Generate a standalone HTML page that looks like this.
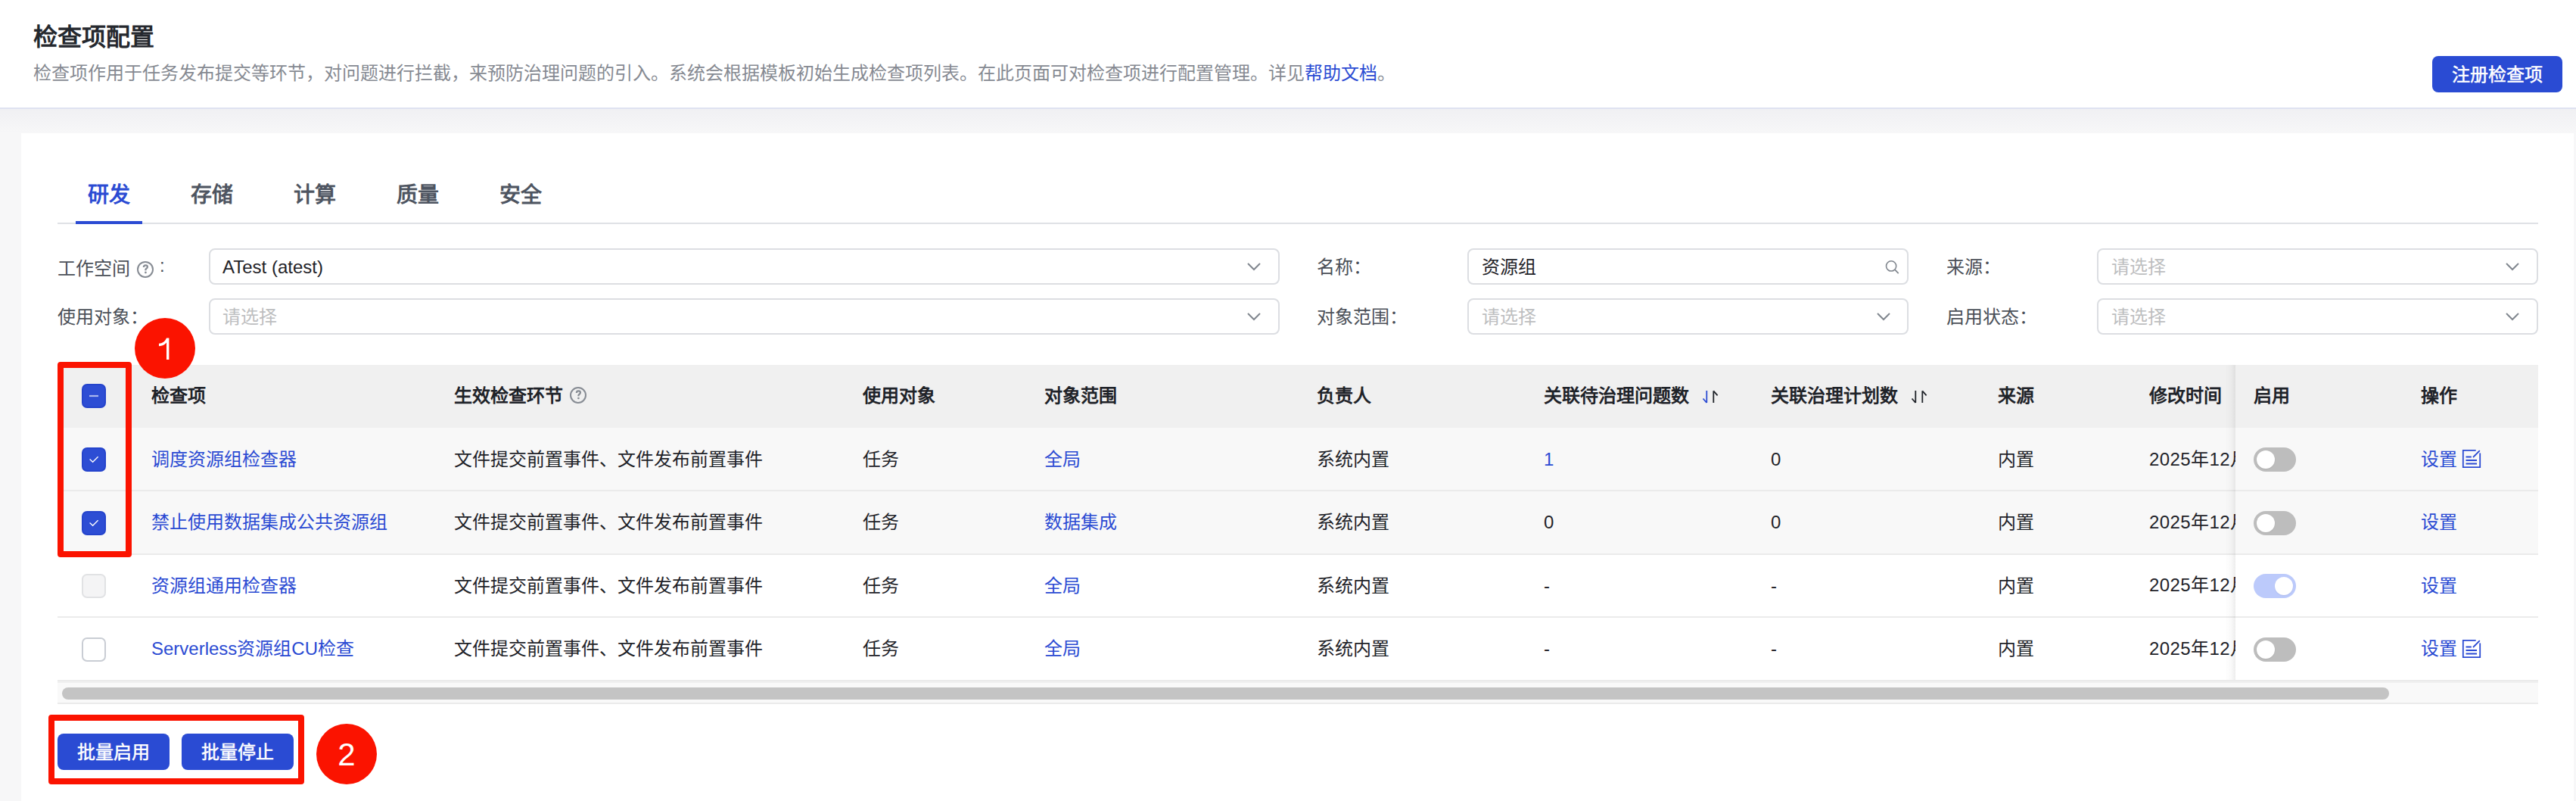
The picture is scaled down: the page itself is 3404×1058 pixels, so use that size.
<!DOCTYPE html>
<html lang="zh-CN"><head><meta charset="utf-8">
<style>
*{margin:0;padding:0;box-sizing:border-box}
html,body{width:3404px;height:1058px;overflow:hidden;background:linear-gradient(#f0f0f3 144px,#f7f7f8 176px,#f7f7f8);font-family:"Liberation Sans",sans-serif;color:#1f2329}
.a{position:absolute;white-space:nowrap}
#hdr{left:0;top:0;width:3404px;height:144px;background:#fff;border-bottom:2px solid #dfe2f1}
#title{left:44px;top:29px;font-size:32px;line-height:40px;font-weight:bold;color:#25282e}
#desc{left:44px;top:81px;font-size:24px;line-height:32px;color:#868a92}
#desc b{font-weight:normal;color:#2b4bd3}
.btn{background:#2a4bd3;color:#fff;border-radius:8px;font-size:24px;text-align:center;line-height:48px;height:48px;padding-top:1px;-webkit-text-stroke:0.5px #fff}
#card{left:28px;top:176px;width:3373px;height:900px;background:#fff}
.tab{top:240px;font-size:28px;line-height:36px;font-weight:bold;color:#4e5561}
.lbl{font-size:24px;line-height:32px;color:#4b5058}
.inp{height:48px;border:2px solid #dcdee2;border-radius:8px;background:#fff}
.ph{font-size:24px;line-height:32px;color:#bdbec0}
.th{font-size:24px;line-height:32px;font-weight:bold;color:#1f2329}
.td{font-size:24px;line-height:32px;color:#1f2329}
.lk{color:#2b4bd3}
.red{border:8px solid #fb1300;border-radius:4px}
.circ{background:#fb1300;border-radius:50%;color:#fff;text-align:center;font-size:42px}
.cb{width:32px;height:32px;border-radius:7px;border:2px solid #c9cdd4;background:#fff}
.cb.on{background:#2d4dd4;border-color:#2544cc}
.cb.on svg{position:absolute;left:-2px;top:-2px}
.cb.dis{background:#f4f4f5;border-color:#e1e2e4}
.tg{width:56px;height:32px;border-radius:16px;background:#bdbdbd}
.tg i{position:absolute;left:4px;top:4px;width:24px;height:24px;border-radius:50%;background:#fff;box-shadow:0 1px 2px rgba(0,0,0,0.06)}
.tg.on{background:#bccafb}
.tg.on i{left:28px}
</style></head><body>
<div id="hdr" class="a"></div>
<div id="title" class="a">检查项配置</div>
<div id="desc" class="a">检查项作用于任务发布提交等环节，对问题进行拦截，来预防治理问题的引入。系统会根据模板初始生成检查项列表。在此页面可对检查项进行配置管理。详见<b>帮助文档</b>。</div>
<div class="a btn" style="left:3214px;top:74px;width:172px">注册检查项</div>

<div id="card" class="a"></div>
<!-- tabs -->
<div class="a tab" style="left:116px;color:#2b4bd3">研发</div>
<div class="a tab" style="left:252px">存储</div>
<div class="a tab" style="left:388px">计算</div>
<div class="a tab" style="left:524px">质量</div>
<div class="a tab" style="left:660px">安全</div>
<div class="a" style="left:76px;top:294px;width:3278px;height:2px;background:#dfe1e6"></div>
<div class="a" style="left:100px;top:292px;width:88px;height:4px;background:#2b4bd3"></div>


<!-- filters -->
<div class="a lbl" style="left:76px;top:339px">工作空间</div>
<svg class="a" style="left:180px;top:344px" width="24" height="24" viewBox="0 0 24 24"><circle cx="12" cy="11.9" r="10" fill="none" stroke="#878c94" stroke-width="2"/><path d="M9.9 8.9C9.9 7.2 10.9 6.3 12.4 6.3C13.9 6.3 14.9 7.2 14.9 8.5C14.9 9.7 14.1 10.3 13.3 10.8C12.6 11.3 12.4 11.8 12.4 12.6V13.2" fill="none" stroke="#878c94" stroke-width="2.3"/><circle cx="12.4" cy="15.9" r="1.35" fill="#878c94"/></svg>
<div class="a lbl" style="left:211px;top:335px">:</div>
<div class="a inp" style="left:276px;top:328px;width:1415px"></div>
<div class="a td" style="left:294px;top:337px">ATest (atest)</div>
<svg class="a chev" style="left:1647px;top:346px" width="20" height="12" viewBox="0 0 20 12"><path d="M2 2l8 8 8-8" fill="none" stroke="#80868e" stroke-width="2"/></svg>

<div class="a lbl" style="left:76px;top:403px">使用对象：</div>
<div class="a inp" style="left:276px;top:394px;width:1415px"></div>
<div class="a ph" style="left:294px;top:403px">请选择</div>
<svg class="a chev" style="left:1647px;top:412px" width="20" height="12" viewBox="0 0 20 12"><path d="M2 2l8 8 8-8" fill="none" stroke="#80868e" stroke-width="2"/></svg>

<div class="a lbl" style="left:1740px;top:337px">名称：</div>
<div class="a inp" style="left:1939px;top:328px;width:583px"></div>
<div class="a td" style="left:1958px;top:337px">资源组</div>
<svg class="a" style="left:2490px;top:342px" width="22" height="22" viewBox="0 0 22 22"><circle cx="9.1" cy="9.4" r="6.6" fill="none" stroke="#80868e" stroke-width="1.6"/><path d="M13.9 14.1l4.8 5" stroke="#80868e" stroke-width="1.7"/></svg>

<div class="a lbl" style="left:1740px;top:403px">对象范围：</div>
<div class="a inp" style="left:1939px;top:394px;width:583px"></div>
<div class="a ph" style="left:1958px;top:403px">请选择</div>
<svg class="a chev" style="left:2479px;top:412px" width="20" height="12" viewBox="0 0 20 12"><path d="M2 2l8 8 8-8" fill="none" stroke="#80868e" stroke-width="2"/></svg>

<div class="a lbl" style="left:2572px;top:337px">来源：</div>
<div class="a inp" style="left:2771px;top:328px;width:583px"></div>
<div class="a ph" style="left:2790px;top:337px">请选择</div>
<svg class="a chev" style="left:3310px;top:346px" width="20" height="12" viewBox="0 0 20 12"><path d="M2 2l8 8 8-8" fill="none" stroke="#80868e" stroke-width="2"/></svg>

<div class="a lbl" style="left:2572px;top:403px">启用状态：</div>
<div class="a inp" style="left:2771px;top:394px;width:583px"></div>
<div class="a ph" style="left:2790px;top:403px">请选择</div>
<svg class="a chev" style="left:3310px;top:412px" width="20" height="12" viewBox="0 0 20 12"><path d="M2 2l8 8 8-8" fill="none" stroke="#80868e" stroke-width="2"/></svg>

<!-- table -->
<div class="a" style="left:76px;top:482px;width:3278px;height:83px;background:#f0f0f0"></div>
<div class="a" style="left:76px;top:565px;width:3278px;height:167px;background:#f8f8f8"></div>
<div class="a" style="left:76px;top:732px;width:3278px;height:167px;background:#fff"></div>
<div class="a" style="left:76px;top:647px;width:3278px;height:2px;background:#ebebeb"></div>
<div class="a" style="left:76px;top:731px;width:3278px;height:2px;background:#ebebeb"></div>
<div class="a" style="left:76px;top:814px;width:3278px;height:2px;background:#ebebeb"></div>
<div class="a" style="left:76px;top:898px;width:3278px;height:2px;background:#ebebeb"></div>
<!-- scrollbar -->
<div class="a" style="left:76px;top:900px;width:3278px;height:30px;background:#f9f9f9;border-top:2px solid #f0f0f0;border-bottom:2px solid #ebebeb"></div>
<div class="a" style="left:82px;top:908px;width:3075px;height:16px;background:#c4c4c4;border-radius:8px"></div>

<div class="a th" style="left:200px;top:507px">检查项</div>
<div class="a th" style="left:600px;top:507px">生效检查环节</div>
<svg class="a" style="left:752px;top:510px" width="24" height="24" viewBox="0 0 24 24"><circle cx="12" cy="12" r="10" fill="none" stroke="#878c94" stroke-width="2"/><path d="M9.9 9C9.9 7.3 10.9 6.4 12.4 6.4C13.9 6.4 14.9 7.3 14.9 8.6C14.9 9.8 14.1 10.4 13.3 10.9C12.6 11.4 12.4 11.9 12.4 12.7V13.3" fill="none" stroke="#878c94" stroke-width="2.3"/><circle cx="12.4" cy="16" r="1.35" fill="#878c94"/></svg>
<div class="a th" style="left:1140px;top:507px">使用对象</div>
<div class="a th" style="left:1380px;top:507px">对象范围</div>
<div class="a th" style="left:1740px;top:507px">负责人</div>
<div class="a th" style="left:2040px;top:507px">关联待治理问题数</div>
<svg class="a" style="left:2247px;top:514px" width="26" height="22" viewBox="0 0 26 22"><path d="M8.3 2v16M3.5 12.5l4.8 5.5" fill="none" stroke="#2b4bd3" stroke-width="1.8"/><path d="M17.3 18V2.3M17.3 2.3l5.3 6" fill="none" stroke="#1f2329" stroke-width="1.8"/></svg>
<div class="a th" style="left:2340px;top:507px">关联治理计划数</div>
<svg class="a" style="left:2523px;top:514px" width="26" height="22" viewBox="0 0 26 22"><path d="M8.3 2v16M3.5 12.5l4.8 5.5" fill="none" stroke="#1f2329" stroke-width="1.8"/><path d="M17.3 18V2.3M17.3 2.3l5.3 6" fill="none" stroke="#1f2329" stroke-width="1.8"/></svg>
<div class="a th" style="left:2640px;top:507px">来源</div>
<div class="a th" style="left:2840px;top:507px">修改时间</div>

<div class="a td lk" style="left:200px;top:591px">调度资源组检查器</div>
<div class="a td" style="left:600px;top:591px">文件提交前置事件、文件发布前置事件</div>
<div class="a td" style="left:1140px;top:591px">任务</div>
<div class="a td lk" style="left:1380px;top:591px">全局</div>
<div class="a td" style="left:1740px;top:591px">系统内置</div>
<div class="a td lk" style="left:2040px;top:591px">1</div>
<div class="a td" style="left:2340px;top:591px">0</div>
<div class="a td" style="left:2640px;top:591px">内置</div>
<div class="a td" style="left:2840px;top:591px;width:114px;overflow:hidden;letter-spacing:0.4px">2025年12月22日</div>

<div class="a td lk" style="left:200px;top:674px">禁止使用数据集成公共资源组</div>
<div class="a td" style="left:600px;top:674px">文件提交前置事件、文件发布前置事件</div>
<div class="a td" style="left:1140px;top:674px">任务</div>
<div class="a td lk" style="left:1380px;top:674px">数据集成</div>
<div class="a td" style="left:1740px;top:674px">系统内置</div>
<div class="a td" style="left:2040px;top:674px">0</div>
<div class="a td" style="left:2340px;top:674px">0</div>
<div class="a td" style="left:2640px;top:674px">内置</div>
<div class="a td" style="left:2840px;top:674px;width:114px;overflow:hidden;letter-spacing:0.4px">2025年12月22日</div>

<div class="a td lk" style="left:200px;top:758px">资源组通用检查器</div>
<div class="a td" style="left:600px;top:758px">文件提交前置事件、文件发布前置事件</div>
<div class="a td" style="left:1140px;top:758px">任务</div>
<div class="a td lk" style="left:1380px;top:758px">全局</div>
<div class="a td" style="left:1740px;top:758px">系统内置</div>
<div class="a td" style="left:2040px;top:758px">-</div>
<div class="a td" style="left:2340px;top:758px">-</div>
<div class="a td" style="left:2640px;top:758px">内置</div>
<div class="a td" style="left:2840px;top:757px;width:114px;overflow:hidden;letter-spacing:0.4px">2025年12月22日</div>

<div class="a td lk" style="left:200px;top:841px">Serverless资源组CU检查</div>
<div class="a td" style="left:600px;top:841px">文件提交前置事件、文件发布前置事件</div>
<div class="a td" style="left:1140px;top:841px">任务</div>
<div class="a td lk" style="left:1380px;top:841px">全局</div>
<div class="a td" style="left:1740px;top:841px">系统内置</div>
<div class="a td" style="left:2040px;top:841px">-</div>
<div class="a td" style="left:2340px;top:841px">-</div>
<div class="a td" style="left:2640px;top:841px">内置</div>
<div class="a td" style="left:2840px;top:841px;width:114px;overflow:hidden;letter-spacing:0.4px">2025年12月22日</div>

<div class="a" style="left:2940px;top:482px;width:14px;height:416px;background:linear-gradient(to right,rgba(0,0,0,0),rgba(0,0,0,0.025) 60%,rgba(0,0,0,0.07))"></div>
<div class="a" style="left:2954px;top:482px;width:400px;height:83px;background:#f0f0f0"></div>
<div class="a" style="left:2954px;top:565px;width:400px;height:82px;background:#f8f8f8"></div>
<div class="a" style="left:2954px;top:649px;width:400px;height:82px;background:#f8f8f8"></div>
<div class="a" style="left:2954px;top:733px;width:400px;height:81px;background:#fff"></div>
<div class="a" style="left:2954px;top:816px;width:400px;height:81px;background:#fff"></div>
<div class="a th" style="left:2978px;top:507px">启用</div>
<div class="a th" style="left:3199px;top:507px">操作</div>

<div class="a tg" style="left:2978px;top:591px"><i></i></div>
<div class="a td lk" style="left:3199px;top:591px">设置</div>
<svg class="a" style="left:3253px;top:593px" width="26" height="26" viewBox="0 0 26 26"><path d="M18.7 1.8H1.8v22.4h22.4V5.5M15 11l8.8-8.8M5.5 10.5h7.3M5.5 15h14.5M5.5 19.5h14.5" fill="none" stroke="#2b4bd3" stroke-width="1.8"/></svg>

<div class="a tg" style="left:2978px;top:675px"><i></i></div>
<div class="a td lk" style="left:3199px;top:674px">设置</div>

<div class="a tg on" style="left:2978px;top:758px"><i></i></div>
<div class="a td lk" style="left:3199px;top:758px">设置</div>

<div class="a tg" style="left:2978px;top:842px"><i></i></div>
<div class="a td lk" style="left:3199px;top:841px">设置</div>
<svg class="a" style="left:3253px;top:844px" width="26" height="26" viewBox="0 0 26 26"><path d="M18.7 1.8H1.8v22.4h22.4V5.5M15 11l8.8-8.8M5.5 10.5h7.3M5.5 15h14.5M5.5 19.5h14.5" fill="none" stroke="#2b4bd3" stroke-width="1.8"/></svg>
<div class="a cb on" style="left:108px;top:507px"><svg width="32" height="32"><path d="M10 16h12" stroke="#aab6ee" stroke-width="2.2"/></svg></div>
<div class="a cb on" style="left:108px;top:591px"><svg width="32" height="32"><path d="M10.6 15.6l4 3.7 7-7" fill="none" stroke="#fff" stroke-width="1.3"/></svg></div>
<div class="a cb on" style="left:108px;top:675px"><svg width="32" height="32"><path d="M10.6 15.6l4 3.7 7-7" fill="none" stroke="#fff" stroke-width="1.3"/></svg></div>
<div class="a cb dis" style="left:108px;top:758px"></div>
<div class="a cb" style="left:108px;top:842px"></div>

<!-- bottom buttons -->
<div class="a btn" style="left:76px;top:969px;width:148px">批量启用</div>
<div class="a btn" style="left:240px;top:969px;width:148px">批量停止</div>
<!-- annotations -->
<div class="a red" style="left:76px;top:478px;width:98px;height:258px"></div>
<div class="a red" style="left:64px;top:944px;width:338px;height:92px"></div>
<div class="a circ" style="left:178px;top:420px;width:80px;height:80px"></div>
<svg class="a" style="left:0;top:0" width="300" height="500"><path d="M220 446.5h3.4V475H220V452.6C217.6 455.6 214.4 457.2 210 457.2V453.7C214.6 453.7 218.2 450.8 220 446.5Z" fill="#fff"/></svg>
<div class="a circ" style="left:418px;top:956px;width:80px;height:80px;line-height:82px">2</div>
</body></html>
